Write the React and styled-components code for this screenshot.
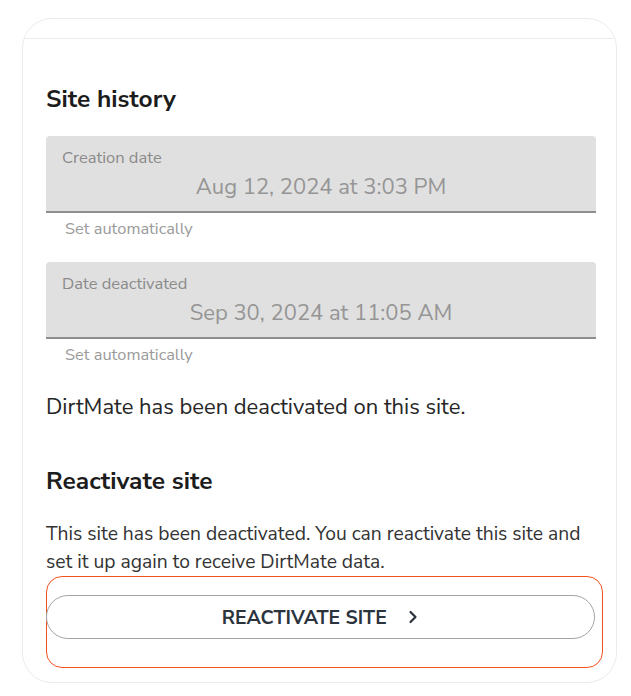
import styled, { createGlobalStyle } from "styled-components";

const GlobalStyle = createGlobalStyle`
    body {
        margin: 0;
        background: #ffffff;
        font-family: "Nunito Sans", Lato, "Open Sans", sans-serif;
    }
`;

const fields = [
    { label: "Creation date", value: "Aug 12, 2024 at 3:03 PM" },
    { label: "Date deactivated", value: "Sep 30, 2024 at 11:05 AM" },
];

export default function App() {
    return (
        <Page>
            <GlobalStyle />
            <Card>
                <TopStrip />
                <Body>
                    <Heading>Site history</Heading>

                    {fields.map((f) => (
                        <FieldGroup key={f.label}>
                            <Field>
                                <FieldLabel>{f.label}</FieldLabel>
                                <FieldValue>{f.value}</FieldValue>
                            </Field>
                            <Helper>Set automatically</Helper>
                        </FieldGroup>
                    ))}

                    <Notice>DirtMate has been deactivated on this site.</Notice>

                    <Heading $top={44}>Reactivate site</Heading>
                    <Text>
                        This site has been deactivated. You can reactivate this site and
                        set it up again to receive DirtMate data.
                    </Text>

                    <Highlight>
                        <Button type="button">
                            REACTIVATE SITE
                            <svg width="12" height="14" viewBox="0 0 12 14" fill="none">
                                <polyline
                                    points="3.5,2 8.5,7 3.5,12"
                                    stroke="#2b333d"
                                    strokeWidth="2.2"
                                    strokeLinecap="round"
                                    strokeLinejoin="round"
                                />
                            </svg>
                        </Button>
                    </Highlight>
                </Body>
            </Card>
        </Page>
    );
}

const Page = styled.div`
    padding: 18px 14px 13px 22px;
`;

const Card = styled.div`
    border: 1.5px solid #ebebeb;
    border-radius: 30px;
    overflow: hidden;
`;

const TopStrip = styled.div`
    height: 19px;
    border-bottom: 1.5px solid #ebebeb;
`;

const Body = styled.div`
    display: flex;
    flex-direction: column;
    padding: 0 20px 14px 23px;
`;

const Heading = styled.h2`
    margin: ${(p) => p.$top ?? 44}px 0 0;
    font-size: 24.5px;
    line-height: 32px;
    font-weight: 700;
    color: #1c1c1c;
`;

const FieldGroup = styled.div`
    display: flex;
    flex-direction: column;
    margin-top: 21px;

    & + & {
        margin-top: 23px;
    }
`;

const Field = styled.div`
    display: flex;
    flex-direction: column;
    height: 77px;
    padding: 12px 16px 0;
    box-sizing: border-box;
    background: #e0e0e0;
    border-radius: 4px 4px 0 0;
    border-bottom: 2px solid #8e8e8e;
`;

const FieldLabel = styled.span`
    font-size: 16.5px;
    line-height: 20px;
    color: #8a8a8a;
`;

const FieldValue = styled.span`
    margin-top: 5px;
    text-align: center;
    font-size: 22px;
    line-height: 28px;
    color: #959595;
`;

const Helper = styled.span`
    padding: 6px 0 0 19px;
    font-size: 16.4px;
    line-height: 20px;
    color: #9a9a9a;
`;

const Notice = styled.p`
    margin: 28px 0 0;
    font-size: 22px;
    line-height: 28px;
    color: #262626;
`;

const Text = styled.p`
    margin: 23px 0 0;
    font-size: 19.3px;
    line-height: 28px;
    color: #333333;
`;

const Highlight = styled.div`
    margin-top: 0;
    margin-right: -7px;
    padding: 18px 7px 28px 0;
    border: 1.5px solid #f4511e;
    border-radius: 16px;
`;

const Button = styled.button`
    display: flex;
    align-items: center;
    justify-content: center;
    gap: 20px;
    width: calc(100% + 1.5px);
    height: 44px;
    margin-left: -1.5px;
    background: #ffffff;
    border: 1.5px solid #a0a5aa;
    border-radius: 22px;
    font-family: inherit;
    font-size: 19.4px;
    font-weight: 700;
    color: #2b333d;
    cursor: pointer;
`;
